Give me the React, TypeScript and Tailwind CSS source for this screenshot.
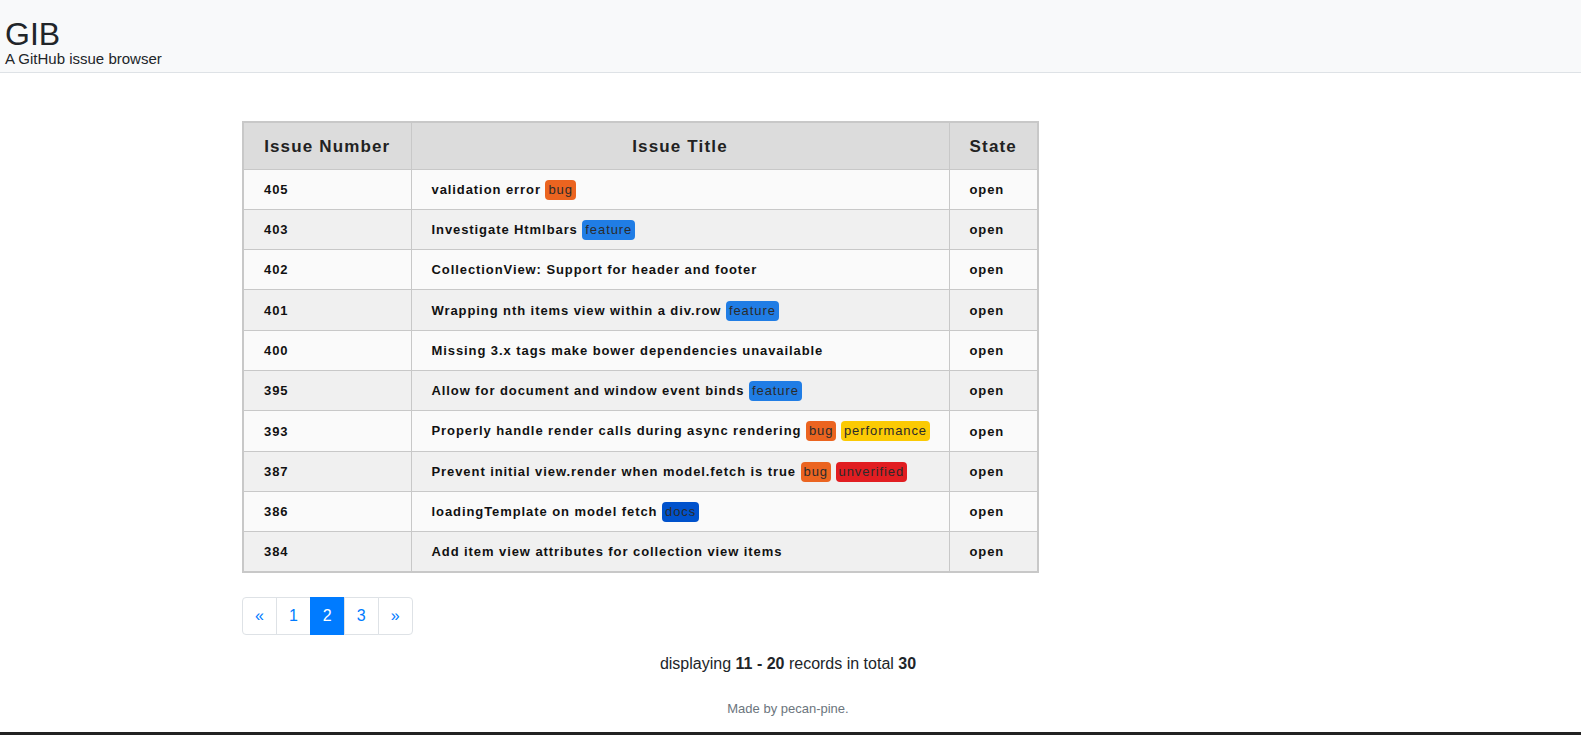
type Label = { name: string; color: string };
type Issue = { number: number; title: string; labels: Label[]; state: string };

const BUG = { name: "bug", color: "bg-[#eb6420]" };
const FEATURE = { name: "feature", color: "bg-[#207de5]" };
const PERF = { name: "performance", color: "bg-[#fbca04]" };
const UNVERIFIED = { name: "unverified", color: "bg-[#e11d21]" };
const DOCS = { name: "docs", color: "bg-[#0052cc]" };

const issues: Issue[] = [
  { number: 405, title: "validation error", labels: [BUG], state: "open" },
  { number: 403, title: "Investigate Htmlbars", labels: [FEATURE], state: "open" },
  { number: 402, title: "CollectionView: Support for header and footer", labels: [], state: "open" },
  { number: 401, title: "Wrapping nth items view within a div.row", labels: [FEATURE], state: "open" },
  { number: 400, title: "Missing 3.x tags make bower dependencies unavailable", labels: [], state: "open" },
  { number: 395, title: "Allow for document and window event binds", labels: [FEATURE], state: "open" },
  { number: 393, title: "Properly handle render calls during async rendering", labels: [BUG, PERF], state: "open" },
  { number: 387, title: "Prevent initial view.render when model.fetch is true", labels: [BUG, UNVERIFIED], state: "open" },
  { number: 386, title: "loadingTemplate on model fetch", labels: [DOCS], state: "open" },
  { number: 384, title: "Add item view attributes for collection view items", labels: [], state: "open" },
];

function Badge({ label }: { label: Label }) {
  return (
    <span className={`inline-block rounded-[4px] px-[3px] font-normal text-[#2b2b2b] leading-[20px] ${label.color}`}>
      {label.name}
    </span>
  );
}

function IssueTable() {
  return (
    <table className="w-[795px] table-fixed border-collapse border-2 border-[#c8c8c8] text-[#111]">
      <colgroup>
        <col className="w-[168px]" />
        <col className="w-[538px]" />
        <col className="w-[89px]" />
      </colgroup>
      <thead>
        <tr className="bg-[#dcdcdc] h-[47px] text-[17px] text-[#222] tracking-[1.15px]">
          <th className="border border-[#c8c8c8] font-bold pt-[2px]">Issue Number</th>
          <th className="border border-[#c8c8c8] font-bold pt-[2px]">Issue Title</th>
          <th className="border border-[#c8c8c8] font-bold pt-[2px]">State</th>
        </tr>
      </thead>
      <tbody className="text-[13px] font-bold tracking-[0.92px]">
        {issues.map((issue, i) => (
          <tr key={issue.number} className={`h-[40.3px] ${i % 2 === 0 ? "bg-[#fafafa]" : "bg-[#f0f0f0]"}`}>
            <td className="border border-[#c8c8c8] pl-[20px] pt-[1px]">{issue.number}</td>
            <td className="border border-[#c8c8c8] pl-[20px] pt-[1px]">
              {issue.title}
              {issue.labels.map((l) => (
                <span key={l.name}>
                  {" "}
                  <Badge label={l} />
                </span>
              ))}
            </td>
            <td className="border border-[#c8c8c8] pl-[20px] pt-[1px]">{issue.state}</td>
          </tr>
        ))}
      </tbody>
    </table>
  );
}

function Pagination() {
  const items = ["«", "1", "2", "3", "»"];
  return (
    <ul className="flex">
      {items.map((it) => {
        const active = it === "2";
        return (
          <li
            key={it}
            className={`-ml-px first:ml-0 border px-[12px] py-[8px] text-[16px] leading-[20px] first:rounded-l-[4px] last:rounded-r-[4px] ${
              active ? "bg-[#007bff] border-[#007bff] text-white" : "bg-white border-[#dee2e6] text-[#007bff]"
            }`}
          >
            {it}
          </li>
        );
      })}
    </ul>
  );
}

export default function App() {
  return (
    <div className="min-h-screen flex flex-col bg-white text-[#212529] font-['Liberation_Sans',Arial,sans-serif]">
      <header className="h-[73px] bg-[#f8f9fa] border-b border-[#dee2e6] pt-[18px] pl-[5px]">
        <h1 className="text-[32px] leading-[32px]">GIB</h1>
        <p className="text-[15px] leading-[18px]">A GitHub issue browser</p>
      </header>

      <main className="w-[1097px] mx-auto pt-[48px]">
        <IssueTable />
        <div className="mt-[24px]">
          <Pagination />
        </div>
      </main>

      <p className="mt-[17px] pr-[5px] text-center text-[16px] leading-[24px]">
        displaying <b>11 - 20</b> records in total <b>30</b>
      </p>

      <footer className="mt-[24px] pr-[5px] text-center text-[13px] leading-[18px] text-[#6c757d]">Made by pecan-pine.</footer>

      <div className="mt-auto h-[3px] bg-[#222]" />
    </div>
  );
}
